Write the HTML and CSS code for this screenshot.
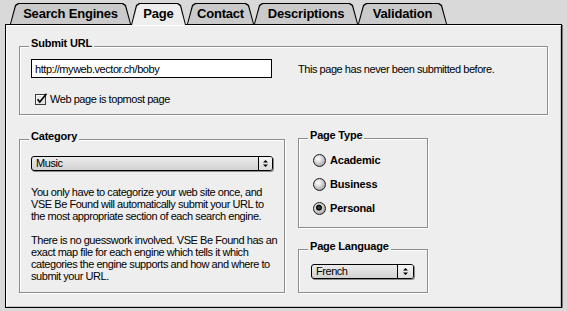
FILE: index.html
```html
<!DOCTYPE html>
<html lang="en">
<head>
  <meta charset="UTF-8" />
  <title>VSE Be Found - Page</title>
  <link rel="stylesheet" href="styles.css">
</head>
<body>
  <div class="window">
    <div class="tabs">
      <div class="tab tab-engines">Search Engines</div>
      <div class="tab tab-page tab-active">Page</div>
      <div class="tab tab-contact">Contact</div>
      <div class="tab tab-desc">Descriptions</div>
      <div class="tab tab-valid">Validation</div>
    </div>

    <div class="panel">
      <div class="group">
        <div class="group-title">Submit URL</div>
        <div class="url-row">
          <input class="text-field" type="text" value="http://myweb.vector.ch/boby">
          <span class="status">This page has never been submitted before.</span>
        </div>
        <label class="check-row">
          <svg class="checkbox" width="13" height="12" viewBox="0 0 13 12">
            <rect x="0.5" y="1.5" width="10" height="10" fill="#e4e4e4" stroke="#3a3a3a"/>
            <path d="M1.5 2.5h8M1.5 2.5v8" stroke="#fff"/>
            <path d="M2.5 6.2 L4.8 9 L11.5 0.8" fill="none" stroke="#000" stroke-width="1.7"/>
          </svg>
          Web page is topmost page
        </label>
      </div>

      <div class="lower">
        <div class="group group-category">
          <div class="group-title">Category</div>
          <div class="popup">
            <span class="popup-value">Music</span>
            <span class="popup-arrows">
              <svg width="5" height="9" viewBox="0 0 5 9"><path d="M0 3.5 L2.5 1 L5 3.5Z M0 5.5 L2.5 8 L5 5.5Z" fill="#000"/></svg>
            </span>
          </div>
          <div class="help">
            <p>You only have to categorize your web site once, and<br>VSE Be Found will automatically submit your URL to<br>the most appropriate section of each search engine.</p>
            <p>There is no guesswork involved. VSE Be Found has an<br>exact map file for each engine which tells it which<br>categories the engine supports and how and where to<br>submit your URL.</p>
          </div>
        </div>

        <div class="side">
          <div class="group group-type">
            <div class="group-title">Page Type</div>
            <div class="radios">
              <div class="radio-row"><span class="radio"></span>Academic</div>
              <div class="radio-row"><span class="radio"></span>Business</div>
              <div class="radio-row"><span class="radio radio-on"></span>Personal</div>
            </div>
          </div>
          <div class="group group-lang">
            <div class="group-title">Page Language</div>
            <div class="popup popup-small">
              <span class="popup-value">French</span>
              <span class="popup-arrows">
                <svg width="5" height="9" viewBox="0 0 5 9"><path d="M0 3.5 L2.5 1 L5 3.5Z M0 5.5 L2.5 8 L5 5.5Z" fill="#000"/></svg>
              </span>
            </div>
          </div>
        </div>
      </div>
    </div>
  </div>
</body>
</html>
```

FILE: styles.css
```css
* {
  box-sizing: border-box;
}

body {
  margin: 0;
  background: #d9d9d9;
  font-family: "Liberation Sans", Arial, sans-serif;
  font-size: 11px;
  line-height: 12px;
  letter-spacing: -0.45px;
  color: #000;
}

.window {
  padding: 3px 0 0 5px;
  width: 562px;
}

/* tabs */
.tabs {
  display: flex;
  padding-left: 5px;
  height: 21px;
  align-items: flex-start;
}

.tab {
  position: relative;
  height: 21px;
  padding-top: 3px;
  background: #000;
  text-align: center;
  font-weight: bold;
  font-size: 13px;
  line-height: 15px;
  letter-spacing: -0.2px;
  clip-path: polygon(0 100%, 5px 2px, 8px 0, calc(100% - 8px) 0, calc(100% - 5px) 2px, 100% 100%);
}

.tab::before {
  content: "";
  position: absolute;
  top: 1px;
  left: 1px;
  right: 1px;
  bottom: 0;
  z-index: -1;
  background: #cacaca;
  clip-path: polygon(0 100%, 5px 2px, 8px 0, calc(100% - 8px) 0, calc(100% - 5px) 2px, 100% 100%);
}

.tab-engines { width: 121px; }
.tab-page { width: 55px; }
.tab-contact { width: 67px; margin-left: 1px; }
.tab-desc { width: 104px; }
.tab-valid { width: 89px; }

.tab-active {
  height: 22px;
  margin-bottom: -1px;
  z-index: 1;
}

.tab-active::before {
  background: #eeeeee;
}

/* panel */
.panel {
  width: 557px;
  background: #eeeeee;
  border: 1px solid #000;
  box-shadow: 1px 1px 0 #777, inset 1px 1px 0 #fff, inset -1px -1px 0 #c4c4c4;
  padding: 21px 13px 14px 13px;
}

.group {
  border: 1px solid #8c8c8c;
  box-shadow: 1px 1px 0 #fff, inset 1px 1px 0 #fff;
  padding: 0 11px 9px;
}

.group-title {
  width: fit-content;
  margin: -10px 0 0 -2px;
  padding: 0 2px;
  background: #eeeeee;
  font-weight: bold;
  letter-spacing: -0.2px;
}

.url-row {
  display: flex;
  align-items: center;
  margin-top: 10px;
}

.text-field {
  width: 241px;
  height: 19px;
  margin: 0;
  padding: 0 3px;
  border: 1px solid #000;
  background: #fff;
  font: inherit;
  letter-spacing: inherit;
  color: #000;
}

.status {
  margin-left: 26px;
}

.check-row {
  display: flex;
  align-items: center;
  gap: 2px;
  height: 12px;
  margin: 15px 0 0 4px;
}

.checkbox {
  display: block;
}

/* lower part */
.lower {
  display: flex;
  align-items: flex-start;
  gap: 13px;
  margin-top: 23px;
}

.group-category {
  width: 266px;
  margin-top: 1px;
  padding-bottom: 10px;
}

.popup {
  display: flex;
  height: 15px;
  margin-top: 14px;
  border: 1px solid #000;
  border-radius: 3px;
  background: linear-gradient(#ececec, #d2d2d2);
  box-shadow: 1px 1px 0 #8a8a8a;
  overflow: hidden;
}

.popup-value {
  flex: 1;
  padding-left: 4px;
  line-height: 13px;
}

.popup-arrows {
  width: 14px;
  display: flex;
  align-items: center;
  justify-content: center;
  border-left: 1px solid #000;
  background: linear-gradient(#f4f4f4, #dcdcdc);
}

.help {
  margin-top: 15px;
}

.help p {
  margin: 0 0 12px;
  white-space: nowrap;
}

.help p:last-child {
  margin-bottom: 0;
}

.side {
  width: 130px;
  display: flex;
  flex-direction: column;
  gap: 21px;
}

.group-type {
  padding-bottom: 13px;
}

.radios {
  display: flex;
  flex-direction: column;
  gap: 12px;
  margin-top: 13px;
}

.radio-row {
  display: flex;
  align-items: center;
  gap: 4px;
  height: 12px;
  margin-left: 3px;
  font-weight: bold;
  letter-spacing: -0.2px;
}

.radio {
  width: 13px;
  height: 13px;
  border: 1px solid #1a1a1a;
  border-radius: 50%;
  background: radial-gradient(circle at 38% 35%, #ffffff 0, #e2e2e2 30%, #a8a8a8 75%, #7a7a7a 100%);
}

.radio-on {
  background: radial-gradient(circle at 45% 42%, #555 0, #000 2.5px, transparent 3.5px),
    radial-gradient(circle at 38% 35%, #ffffff 0, #e2e2e2 30%, #a8a8a8 75%, #7a7a7a 100%);
}

.group-lang {
  padding-bottom: 13px;
}

.popup-small {
  width: 103px;
  margin: 12px 0 0 1px;
}

.popup-small .popup-arrows {
  width: 16px;
}
```
